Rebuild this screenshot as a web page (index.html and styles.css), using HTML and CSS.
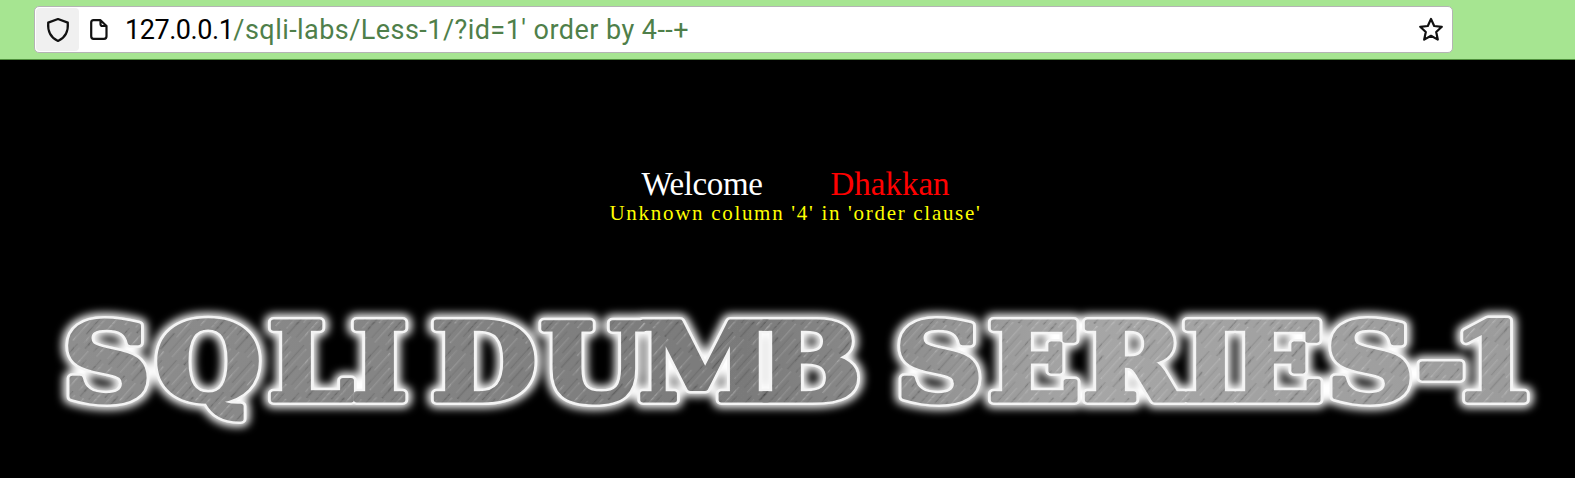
FILE: index.html
```html
<!DOCTYPE html>
<html>
<head>
    <title>Less-1</title>
    <link rel="stylesheet" href="styles.css">
</head>
<body>
    <div class="toolbar">
        <div class="urlbar">
            <div class="shield-btn">
                <svg class="icon-shield" width="24" height="26" viewBox="0 0 24 26">
                    <path d="M12 2 L21.8 5.6 C22.4 13.5 19.5 20.6 12 24 C4.5 20.6 1.6 13.5 2.2 5.6 Z"/>
                </svg>
            </div>
            <svg class="icon-page" width="18" height="21" viewBox="0 0 18 21">
                <path d="M3.5 1.2 H10.5 L16.5 7 V17.3 Q16.5 19.8 14 19.8 H3.5 Q1.2 19.8 1.2 17.3 V3.6 Q1.2 1.2 3.5 1.2 Z M10.5 1.2 V5 Q10.5 7 12.5 7 H16.5"/>
            </svg>
            <div class="url"><span class="host">127.0.0.1</span>/sqli-labs/Less-1/?id=1' order by 4--+</div>
            <svg class="icon-star" width="26" height="25" viewBox="0 0 26 25">
                <path d="M13 2 L16.2 9 L23.8 9.8 L18.2 15 L19.8 22.6 L13 18.8 L6.2 22.6 L7.8 15 L2.2 9.8 L9.8 9 Z"/>
            </svg>
        </div>
    </div>

    <div class="page">
        <div class="message">
            <div class="welcome">Welcome<span class="name">Dhakkan</span></div>
            <div class="error">Unknown column '4' in 'order clause'</div>
        </div>

        <svg class="logo" width="1575" height="150" viewBox="0 0 1575 150">
            <defs>
                <linearGradient id="metal" gradientUnits="userSpaceOnUse" x1="60" y1="0" x2="1530" y2="0">
                    <stop offset="0" stop-color="#8e8e8e"/>
                    <stop offset="0.4" stop-color="#7a7a7a"/>
                    <stop offset="0.6" stop-color="#a6a6a6"/>
                    <stop offset="1" stop-color="#969696"/>
                </linearGradient>
                <pattern id="hatch" width="40" height="26" patternUnits="userSpaceOnUse" patternTransform="rotate(-52)">
                    <rect x="0" y="2" width="28" height="1" fill="#fff" fill-opacity="0.14"/>
                    <rect x="12" y="7" width="28" height="1.2" fill="#000" fill-opacity="0.1"/>
                    <rect x="4" y="11" width="34" height="1" fill="#fff" fill-opacity="0.1"/>
                    <rect x="0" y="15" width="20" height="1.4" fill="#000" fill-opacity="0.12"/>
                    <rect x="18" y="19" width="22" height="1" fill="#fff" fill-opacity="0.16"/>
                    <rect x="2" y="23" width="30" height="1" fill="#000" fill-opacity="0.08"/>
                </pattern>
                <filter id="glow" x="-5%" y="-30%" width="110%" height="160%">
                    <feGaussianBlur stdDeviation="4"/>
                </filter>
                <filter id="soft" x="-5%" y="-30%" width="110%" height="160%">
                    <feGaussianBlur stdDeviation="0.7"/>
                </filter>
                <text id="logo-text" class="logo-text" y="109" transform="scale(1.15 1)" x="54.8 134.8 233 305.2 340 374.8 469.6 554.8 659.1 750 778.3 859.1 940.9 1027.8 1070.4 1153 1231 1260 1262">SQLI DUMB SERIES- 1</text>
            </defs>
            <use href="#logo-text" class="logo-glow" filter="url(#glow)"/>
            <use href="#logo-text" class="logo-edge" filter="url(#soft)"/>
            <use href="#logo-text" class="logo-metal" filter="url(#soft)"/>
            <use href="#logo-text" class="logo-hatch"/>
        </svg>
    </div>
</body>
</html>
```

FILE: styles.css
```css
html, body {
    margin: 0;
    height: 478px;
    overflow: hidden;
    background: #000;
}

.toolbar {
    height: 53px;
    padding: 6px 0 0 34px;
    background: #a6e591;
    border-bottom: 1px solid #4f8f3c;
}

.urlbar {
    width: 1419px;
    height: 47px;
    box-sizing: border-box;
    display: flex;
    align-items: center;
    padding: 0 8px 0 1px;
    background: #fff;
    border: 1px solid #b4b4b4;
    border-radius: 5px;
}

.shield-btn {
    width: 43px;
    height: 43px;
    display: flex;
    align-items: center;
    justify-content: center;
    background: #f0f0f0;
    border-radius: 4px;
}

.icon-shield path, .icon-page path, .icon-star path {
    fill: none;
    stroke: #111;
    stroke-width: 2.2;
    stroke-linejoin: round;
}

.icon-page {
    margin-left: 11px;
}

.url {
    flex: 1;
    margin-left: 17px;
    font-family: Roboto, sans-serif;
    font-size: 27px;
    letter-spacing: 0.45px;
    color: #4f7f4a;
    white-space: nowrap;
}

.host {
    letter-spacing: -0.45px;
    color: #000;
}

.message {
    padding: 105px 0 0 16px;
    text-align: center;
    font-family: "Liberation Serif", serif;
}

.welcome {
    font-size: 33px;
    line-height: 38px;
    letter-spacing: -0.4px;
    color: #fff;
}

.name {
    margin-left: 68px;
    letter-spacing: 0;
    color: #f00;
}

.error {
    font-size: 21px;
    line-height: 20px;
    letter-spacing: 1.7px;
    color: #ff0;
}

.logo {
    display: block;
    margin-top: 68px;
}

.logo-text {
    font-family: "DejaVu Serif", serif;
    font-weight: bold;
    font-size: 106px;
}

.logo-glow {
    fill: #fff;
    stroke: #fff;
    stroke-width: 16px;
    stroke-linejoin: round;
}

.logo-edge {
    fill: #fff;
    stroke: #f4f4f4;
    stroke-width: 10px;
    stroke-linejoin: round;
}

.logo-metal {
    fill: url(#metal);
    stroke: url(#metal);
    stroke-width: 5px;
    stroke-linejoin: round;
}

.logo-hatch {
    fill: url(#hatch);
    stroke: url(#hatch);
    stroke-width: 5px;
    stroke-linejoin: round;
}
```
